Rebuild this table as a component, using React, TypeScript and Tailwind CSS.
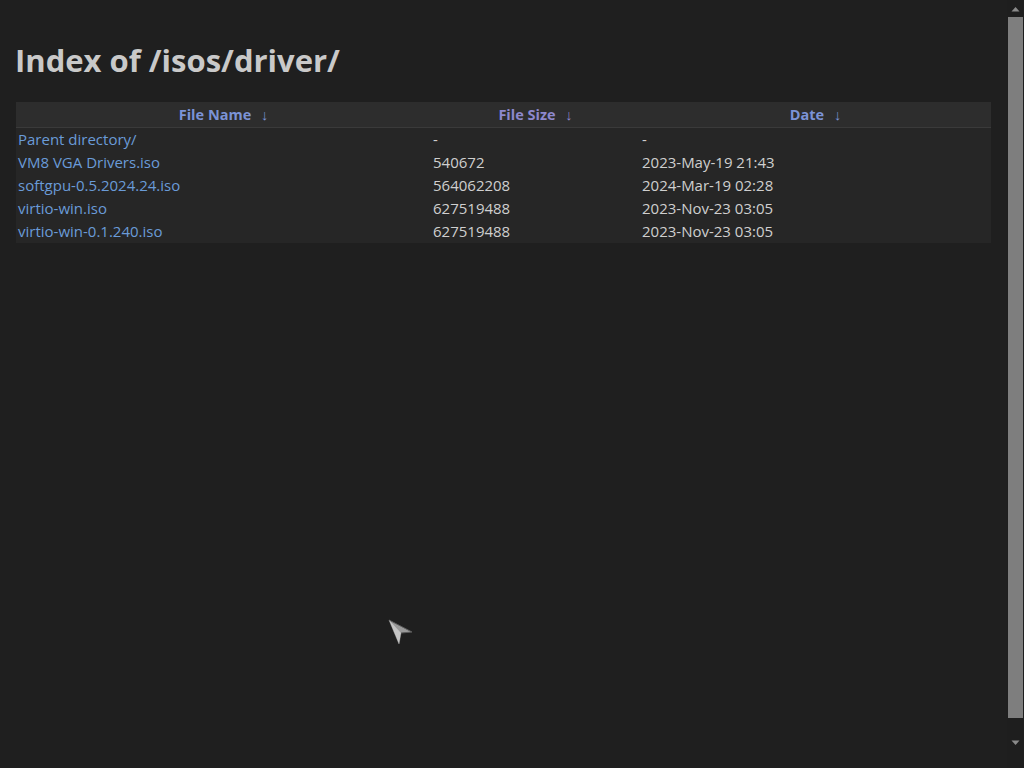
import React from "react";

const rows = [
  { name: "Parent directory/", size: "-", date: "-" },
  { name: "VM8 VGA Drivers.iso", size: "540672", date: "2023-May-19 21:43" },
  { name: "softgpu-0.5.2024.24.iso", size: "564062208", date: "2024-Mar-19 02:28" },
  { name: "virtio-win.iso", size: "627519488", date: "2023-Nov-23 03:05" },
  { name: "virtio-win-0.1.240.iso", size: "627519488", date: "2023-Nov-23 03:05" },
];

export default function App() {
  return (
    <div
      className="relative flex h-[768px] w-[1024px] overflow-hidden bg-[#1f1f1f] text-[#cfcfcf]"
      style={{ fontFamily: '"Open Sans", "Noto Sans", sans-serif' }}
    >
      <div className="flex-1 pl-[16px] pr-[16px]">
        <h1 className="mt-[40px] mb-[22px] -ml-[1px] text-[31px] font-bold leading-[40px] text-[#c9c9c9]">
          Index of /isos/driver/
        </h1>
        <table className="w-full border-collapse bg-[#262626] text-[15px]">
          <thead>
            <tr className="h-[25px] border-b border-[#3a3a3a] bg-[#2d2d2d] text-[14.5px]">
              <th className="w-[415px] pt-[2px] text-center font-bold text-[#7b93d6]">
                File Name <span className="ml-[6px] font-normal">↓</span>
              </th>
              <th className="w-[209px] pt-[2px] text-center font-bold text-[#8d88cc]">
                File Size <span className="ml-[6px] font-normal">↓</span>
              </th>
              <th className="pt-[2px] text-center font-bold text-[#7b93d6]">
                Date <span className="ml-[6px] font-normal">↓</span>
              </th>
            </tr>
          </thead>
          <tbody>
            {rows.map((r, i) => (
              <tr key={i} className="h-[23px] leading-[23px]">
                <td className="pl-[2px] text-[#6a9bd8]">{r.name}</td>
                <td className="pl-[2px] text-[#cfcfcf]">{r.size}</td>
                <td className="pl-[2px] text-[#cfcfcf]">{r.date}</td>
              </tr>
            ))}
          </tbody>
        </table>
      </div>
      <div className="flex w-[17px] flex-col items-center bg-[#1e1e1e]">
        <div className="flex h-[17px] w-full items-center justify-center">
          <svg width="9" height="6" viewBox="0 0 9 6">
            <path d="M0.5 5.5 L4.5 1 L8.5 5.5 Z" fill="#8a8a8a" />
          </svg>
        </div>
        <div className="h-[701px] w-[15px] bg-[#7e7e7e]" />
        <div className="flex flex-1 w-full items-center justify-center">
          <svg width="9" height="6" viewBox="0 0 9 6">
            <path d="M0.5 0.5 L4.5 5 L8.5 0.5 Z" fill="#8a8a8a" />
          </svg>
        </div>
      </div>
      <svg className="absolute left-[386px] top-[617px]" width="30" height="30" viewBox="0 0 30 30">
        <path d="M3 3 L26 15 L15 16 L13 27 Z" fill="#9a9a9a" stroke="#5a5a5a" strokeWidth="1" />
        <path d="M3 3 L15 16 L13 27 Z" fill="#c4c4c4" />
      </svg>
    </div>
  );
}
